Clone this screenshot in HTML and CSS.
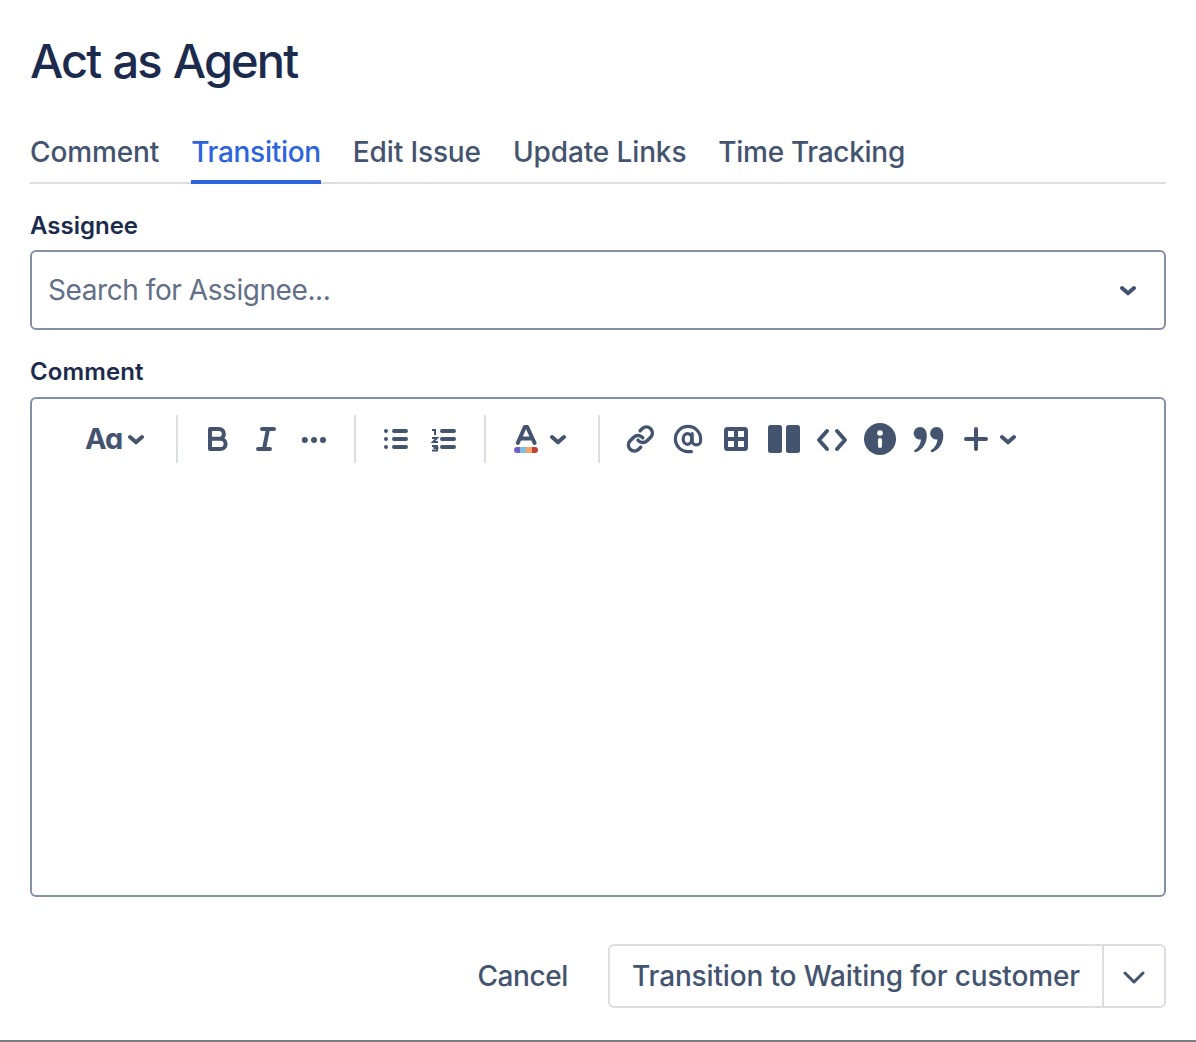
FILE: index.html
```
<!DOCTYPE html>
<html lang="en">
<head>
  <meta charset="UTF-8">
  <meta name="viewport" content="width=device-width, initial-scale=1.0">
  <title>Act as Agent</title>
  <link rel="stylesheet" href="styles.css">
</head>
<body>
  <div class="dialog">
    <h1>Act as Agent</h1>

    <div class="tabs">
      <a class="tab">Comment</a>
      <a class="tab tight active">Transition</a>
      <a class="tab">Edit Issue</a>
      <a class="tab">Update Links</a>
      <a class="tab tight">Time Tracking</a>
    </div>

    <label class="label label-assignee">Assignee</label>
    <div class="select">
      <span class="placeholder">Search for Assignee...</span>
      <svg class="chevron" viewBox="0 0 16 12"><path d="M2 4l6 5.300 6-5.300"/></svg>
    </div>

    <label class="label label-comment">Comment</label>
    <div class="editor">
      <div class="toolbar">
        <div class="group text-style">
          <span class="aa">Aa</span>
          <svg class="chevron" viewBox="0 0 16 12"><path d="M2 4l6 5.300 6-5.300"/></svg>
        </div>
        <div class="divider"></div>
        <div class="group">
          <svg class="icon" viewBox="0 0 48 48"><path d="M16 14h9a4.800 4.800 0 0 1 0 9.800H16zM16 23.800h10.500a5.100 5.100 0 0 1 0 10.200H16z"/></svg>
          <svg class="icon" viewBox="0 0 48 48"><path d="M20 14h12M16 34h12M26 14l-4 20"/></svg>
          <svg class="icon solid" viewBox="0 0 48 48"><circle cx="14.800" cy="25" r="3"/><circle cx="24" cy="25" r="3"/><circle cx="33" cy="25" r="3"/></svg>
        </div>
        <div class="divider"></div>
        <div class="group">
          <svg class="icon" viewBox="0 0 48 48"><path d="M14 16h0M14 24h0M14 32h0M22 16h12M22 24h12M22 32h12"/></svg>
          <svg class="icon" viewBox="0 0 48 48"><path d="M22 16h12M22 24h12M22 32h12"/><path class="digits" d="M12 15h3v5M12 23h5l-4 4h5M12 31h5v4.500h-5M13.500 33h5"/></svg>
        </div>
        <div class="divider"></div>
        <div class="group color">
          <svg class="icon" viewBox="0 0 48 48">
            <path d="M15.800 28L22.800 12h2.400L32.600 28M19 23.500h10.500"/>
            <path class="purple" d="M18 32h-3a3 3 0 0 0 0 6h3z"/>
            <path class="sky" d="M18 32h6v6h-6z"/>
            <path class="orange" d="M24 32h6v6h-6z"/>
            <path class="red" d="M30 32h3a3 3 0 0 1 0 6h-3z"/>
          </svg>
          <svg class="chevron" viewBox="0 0 16 12"><path d="M2 4l6 5.300 6-5.300"/></svg>
        </div>
        <div class="divider"></div>
        <div class="group">
          <svg class="icon link" viewBox="0 0 48 48"><g transform="translate(10 9.600) scale(1.200)"><path d="M10 13a5 5 0 0 0 7.540.540l3-3a5 5 0 0 0-7.070-7.070l-1.720 1.710M14 11a5 5 0 0 0-7.540-.540l-3 3a5 5 0 0 0 7.070 7.070l1.710-1.710"/></g></svg>
          <svg class="icon at" viewBox="0 0 48 48"><ellipse cx="23.500" cy="24" rx="4.300" ry="5.300"/><path d="M28.200 18.500v7.200a4.200 4.200 0 0 0 8.400 0v-1.700A12.600 12.600 0 1 0 24 36.600h3.500"/></svg>
          <svg class="icon" viewBox="0 0 48 48"><rect x="14" y="14" width="20" height="20" rx="1.500"/><path d="M24 14v20M14 24h20"/></svg>
          <svg class="icon solid" viewBox="0 0 48 48"><rect x="8" y="10" width="14" height="28" rx="2.500"/><rect x="26" y="10" width="14" height="28" rx="2.500"/></svg>
          <svg class="icon" viewBox="0 0 48 48"><path d="M19 16l-8 9 8 9M29 16l8 9-8 9"/></svg>
          <svg class="icon solid" viewBox="0 0 48 48"><circle cx="24" cy="24" r="16"/><circle class="hole" cx="24" cy="18" r="2.800"/><rect class="hole" x="22" y="23" width="4" height="10" rx="2"/></svg>
          <svg class="icon solid" viewBox="0 0 48 48"><path id="quote" d="M16 12a6.300 6.300 0 1 0 1 12.500c-.5 5-3 8.500-6 10.300-1.800 1.300-.4 2.900 1.300 2.200C18.300 34.500 22.800 29 22.800 20.500 22.800 15 20 12 16 12z"/><use href="#quote" x="16.500"/></svg>
          <svg class="icon" viewBox="0 0 48 48"><path d="M24 14v20M14 24h20"/></svg>
          <svg class="chevron" viewBox="0 0 16 12"><path d="M2 4l6 5.300 6-5.300"/></svg>
        </div>
      </div>
    </div>

    <div class="footer">
      <button class="cancel">Cancel</button>
      <div class="split">
        <button class="submit">Transition to Waiting for customer</button>
        <button class="more"><svg viewBox="0 0 22 14"><path d="M2 2l9 9 9-9"/></svg></button>
      </div>
    </div>
  </div>
</body>
</html>
```

FILE: styles.css
```
* {
  box-sizing: border-box;
}

body {
  margin: 0;
  font-family: Inter, sans-serif;
  color: #44546f;
  background: #fff;
}

.dialog {
  height: 1042px;
  padding: 32px 30px 0;
  border-bottom: 2px solid #7b7c82;
}

h1 {
  margin: 0;
  font-size: 47px;
  font-weight: 550;
  line-height: 58px;
  letter-spacing: -1.9px;
  word-spacing: 1.5px;
  color: #1c2b4d;
}

.tabs {
  display: flex;
  gap: 32px;
  height: 60px;
  margin-top: 34px;
  border-bottom: 2px solid #dddee4;
}

.tab {
  height: 60px;
  font-size: 28px;
  font-weight: 500;
  line-height: 57px;
  letter-spacing: -0.12px;
  white-space: nowrap;
}

.tab.tight {
  letter-spacing: -0.3px;
}

.tab.active {
  color: #2c64dd;
  border-bottom: 4px solid #2c64dd;
}

.label {
  display: block;
  font-size: 24px;
  font-weight: 600;
  line-height: 32px;
  color: #1c2b4d;
}

.label-assignee {
  margin-top: 26px;
}

.label-comment {
  margin-top: 26px;
  letter-spacing: 0.1px;
}

.select {
  display: flex;
  align-items: center;
  justify-content: space-between;
  height: 80px;
  margin-top: 8px;
  padding: 0 28px 0 16px;
  border: 2px solid #8590a2;
  border-radius: 6px;
}

.placeholder {
  font-size: 28px;
  letter-spacing: -0.43px;
  color: #626f86;
}

.editor {
  height: 500px;
  margin-top: 9px;
  border: 2px solid #8590a2;
  border-radius: 6px;
}

.toolbar {
  display: flex;
  align-items: center;
  height: 48px;
  margin: 16px 0 0 38px;
}

.group {
  display: flex;
  align-items: center;
}

.text-style {
  width: 90px;
  padding-left: 15px;
  gap: 6px;
}

.aa {
  width: 37px;
  padding-bottom: 2px;
  font-size: 29px;
  font-weight: 700;
  font-feature-settings: "cv11";
  letter-spacing: -1px;
}

.color {
  width: 80px;
}

.divider {
  width: 2px;
  height: 48px;
  margin: 0 16px;
  background: #dddee4;
}

svg {
  display: block;
  flex: none;
  fill: none;
  stroke: #44546f;
  stroke-width: 4;
  stroke-linecap: round;
  stroke-linejoin: round;
}

.icon {
  width: 48px;
  height: 48px;
}

.chevron {
  width: 16px;
  height: 12px;
}

.solid {
  fill: #44546f;
  stroke: none;
}

.hole {
  fill: #fff;
}

.link {
  stroke-width: 2.9;
}

.at {
  stroke-width: 3.2;
}

.digits {
  stroke-width: 2;
  stroke-linecap: butt;
  stroke-linejoin: miter;
}

.purple,
.sky,
.orange,
.red {
  stroke: none;
}

.purple {
  fill: #6e5dc6;
}

.sky {
  fill: #7fc1dd;
}

.orange {
  fill: #f4a66a;
}

.red {
  fill: #bf4034;
}

.footer {
  display: flex;
  justify-content: flex-end;
  align-items: center;
  height: 64px;
  margin-top: 47px;
}

button {
  padding: 0;
  border: 0;
  background: none;
  font: 500 28px/60px Inter, sans-serif;
  color: #44546f;
}

.cancel {
  margin-right: 40px;
  letter-spacing: -0.4px;
}

.split {
  display: flex;
  width: 558px;
  height: 64px;
  border: 2px solid #dddee4;
  border-radius: 6px;
}

.submit {
  flex: 1;
  letter-spacing: -0.15px;
  white-space: nowrap;
}

.more {
  display: flex;
  align-items: center;
  justify-content: center;
  width: 62px;
  border-left: 2px solid #dddee4;
}

.more svg {
  width: 22px;
  height: 14px;
  margin-top: 4px;
  stroke-width: 3;
}
```
